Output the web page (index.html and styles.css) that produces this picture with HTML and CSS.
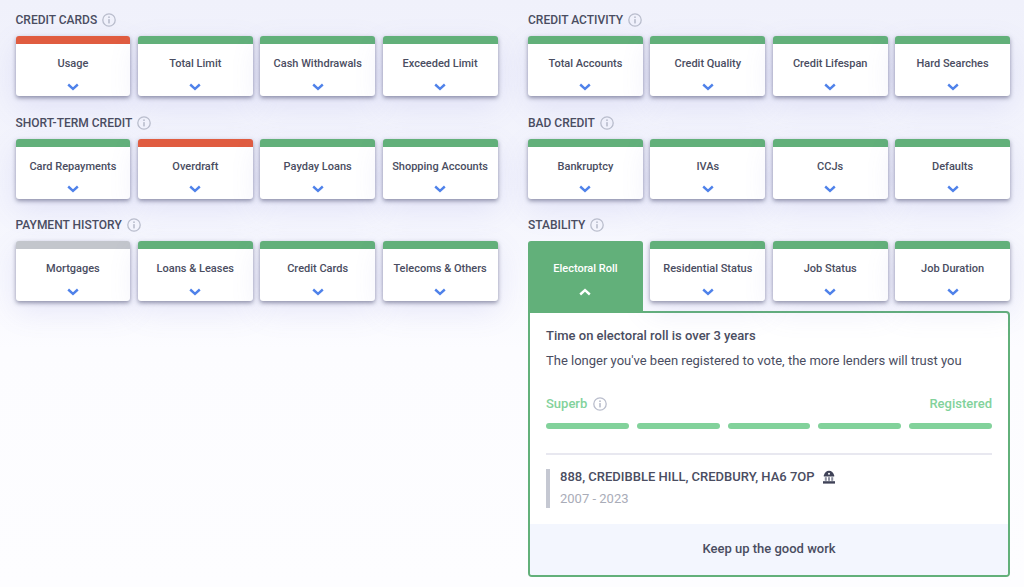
FILE: index.html
```html
<!DOCTYPE html>
<html lang="en">
<head>
  <meta charset="UTF-8" />
  <title>Credit report</title>
  <link rel="stylesheet" href="styles.css">
</head>
<body>
  <svg class="defs" width="0" height="0">
    <symbol id="info" viewBox="0 0 14 14">
      <circle cx="7" cy="7" r="6.2" fill="none" stroke="currentColor" stroke-width="1.3" />
      <circle cx="7" cy="4.2" r="0.9" fill="currentColor" />
      <rect x="6.2" y="6" width="1.6" height="4.4" rx="0.4" fill="currentColor" />
    </symbol>
    <symbol id="chev" viewBox="0 0 12 8">
      <path d="M1.2 1.5 L6 5.8 L10.8 1.5" fill="none" stroke="currentColor" stroke-width="2.4" />
    </symbol>
  </svg>

  <div class="page">
    <!-- Left column -->
    <div class="col">
      <section class="group">
        <h2 class="group-title">CREDIT CARDS <svg class="info"><use href="#info" /></svg></h2>
        <div class="cards">
          <div class="card red"><span class="card-name">Usage</span><svg class="chev"><use href="#chev" /></svg></div>
          <div class="card"><span class="card-name">Total Limit</span><svg class="chev"><use href="#chev" /></svg></div>
          <div class="card"><span class="card-name">Cash Withdrawals</span><svg class="chev"><use href="#chev" /></svg></div>
          <div class="card"><span class="card-name">Exceeded Limit</span><svg class="chev"><use href="#chev" /></svg></div>
        </div>
      </section>

      <section class="group">
        <h2 class="group-title">SHORT-TERM CREDIT <svg class="info"><use href="#info" /></svg></h2>
        <div class="cards">
          <div class="card"><span class="card-name">Card Repayments</span><svg class="chev"><use href="#chev" /></svg></div>
          <div class="card red"><span class="card-name">Overdraft</span><svg class="chev"><use href="#chev" /></svg></div>
          <div class="card"><span class="card-name">Payday Loans</span><svg class="chev"><use href="#chev" /></svg></div>
          <div class="card"><span class="card-name">Shopping Accounts</span><svg class="chev"><use href="#chev" /></svg></div>
        </div>
      </section>

      <section class="group">
        <h2 class="group-title">PAYMENT HISTORY <svg class="info"><use href="#info" /></svg></h2>
        <div class="cards">
          <div class="card grey"><span class="card-name">Mortgages</span><svg class="chev"><use href="#chev" /></svg></div>
          <div class="card"><span class="card-name">Loans &amp; Leases</span><svg class="chev"><use href="#chev" /></svg></div>
          <div class="card"><span class="card-name">Credit Cards</span><svg class="chev"><use href="#chev" /></svg></div>
          <div class="card"><span class="card-name">Telecoms &amp; Others</span><svg class="chev"><use href="#chev" /></svg></div>
        </div>
      </section>
    </div>

    <!-- Right column -->
    <div class="col">
      <section class="group">
        <h2 class="group-title">CREDIT ACTIVITY <svg class="info"><use href="#info" /></svg></h2>
        <div class="cards">
          <div class="card"><span class="card-name">Total Accounts</span><svg class="chev"><use href="#chev" /></svg></div>
          <div class="card"><span class="card-name">Credit Quality</span><svg class="chev"><use href="#chev" /></svg></div>
          <div class="card"><span class="card-name">Credit Lifespan</span><svg class="chev"><use href="#chev" /></svg></div>
          <div class="card"><span class="card-name">Hard Searches</span><svg class="chev"><use href="#chev" /></svg></div>
        </div>
      </section>

      <section class="group">
        <h2 class="group-title">BAD CREDIT <svg class="info"><use href="#info" /></svg></h2>
        <div class="cards">
          <div class="card"><span class="card-name">Bankruptcy</span><svg class="chev"><use href="#chev" /></svg></div>
          <div class="card"><span class="card-name">IVAs</span><svg class="chev"><use href="#chev" /></svg></div>
          <div class="card"><span class="card-name">CCJs</span><svg class="chev"><use href="#chev" /></svg></div>
          <div class="card"><span class="card-name">Defaults</span><svg class="chev"><use href="#chev" /></svg></div>
        </div>
      </section>

      <section class="group">
        <h2 class="group-title">STABILITY <svg class="info"><use href="#info" /></svg></h2>
        <div class="cards">
          <div class="card open"><span class="card-name">Electoral Roll</span><svg class="chev"><use href="#chev" /></svg></div>
          <div class="card"><span class="card-name">Residential Status</span><svg class="chev"><use href="#chev" /></svg></div>
          <div class="card"><span class="card-name">Job Status</span><svg class="chev"><use href="#chev" /></svg></div>
          <div class="card"><span class="card-name">Job Duration</span><svg class="chev"><use href="#chev" /></svg></div>
        </div>

        <div class="detail">
          <div class="detail-body">
            <h3 class="detail-title">Time on electoral roll is over 3 years</h3>
            <p class="detail-text">The longer you've been registered to vote, the more lenders will trust you</p>
            <div class="score">
              <span>Superb <svg class="info"><use href="#info" /></svg></span>
              <span>Registered</span>
            </div>
            <div class="bars">
              <i></i><i></i><i></i><i></i><i></i>
            </div>
            <div class="address">
              <div class="address-line">888, CREDIBBLE HILL, CREDBURY, HA6 7OP
                <svg class="bank" viewBox="0 0 14 14">
                  <path d="M7 .8 C9.5 .8 11.4 2.6 12.2 5.4 V6.4 H1.8 V5.4 C2.6 2.6 4.5 .8 7 .8 Z" fill="#3f4257" />
                  <circle cx="7" cy="3.8" r="1" fill="#fff" />
                  <rect x="2.8" y="7.2" width="2" height="3.6" fill="#8d90a0" />
                  <rect x="6" y="7.2" width="2" height="3.6" fill="#8d90a0" />
                  <rect x="9.2" y="7.2" width="2" height="3.6" fill="#8d90a0" />
                  <rect x="1" y="11.2" width="12" height="2.4" fill="#3f4257" />
                </svg>
              </div>
              <div class="address-dates">2007 - 2023</div>
            </div>
          </div>
          <div class="detail-foot">Keep up the good work</div>
        </div>
      </section>
    </div>
  </div>
</body>
</html>
```

FILE: styles.css
```css
* {
  box-sizing: border-box;
}
html, body {
  height: 587px;
  overflow: hidden;
}
body {
  margin: 0;
  font-family: Roboto, "Liberation Sans", sans-serif;
  color: #4a4d61;
  background: linear-gradient(180deg, #f0f1fb 0, #f4f5fd 200px, #fcfcff 350px, #fdfdff 587px);
}
.defs {
  position: absolute;
}
.page {
  display: flex;
  gap: 30.5px;
  padding: 12px 14px 0 15.5px;
}
.col {
  width: 482px;
}

.group {
  margin-bottom: 18.5px;
}
.group-title {
  display: flex;
  align-items: center;
  gap: 5px;
  height: 16px;
  margin: 0 0 8px;
  font-size: 12px;
  font-weight: 500;
  line-height: 16px;
}
.info {
  width: 14px;
  height: 14px;
  color: #b9bdcc;
}

/* Cards */
.cards {
  display: grid;
  grid-template-columns: repeat(4, 1fr);
  gap: 7.5px;
}
.card {
  display: flex;
  flex-direction: column;
  align-items: center;
  height: 60px;
  padding-top: 13px;
  background-color: #fff;
  border-top: 8px solid #62b07a;
  border-radius: 3px;
  box-shadow: 0 2px 4px rgba(50, 52, 90, 0.5), 0 10px 30px rgba(110, 115, 210, 0.14);
}
.card.red {
  border-top-color: #e05c40;
}
.card.grey {
  border-top-color: #c3c6cc;
}
.card-name {
  font-size: 11px;
  font-weight: 500;
  line-height: 13px;
  white-space: nowrap;
}
.chev {
  width: 12px;
  height: 8px;
  margin-top: 12.5px;
  color: #4f82ea;
}
.card.open {
  height: 71px;
  margin-bottom: -11px;
  padding-top: 21px;
  background-color: #62b07a;
  border-top: 0;
  border-radius: 3px 3px 0 0;
  box-shadow: none;
  color: #fff;
  position: relative;
  z-index: 1;
}
.card.open .chev {
  color: #fff;
  transform: rotate(180deg);
}

/* Detail panel */
.detail {
  height: 266px;
  margin-top: 10px;
  background-color: #fff;
  border: 2px solid #62b07a;
  border-radius: 0 4px 4px 4px;
  overflow: hidden;
}
.detail-body {
  padding: 15px 16px 0;
  height: 211px;
}
.detail-title {
  margin: 0 0 9px;
  font-size: 13px;
  font-weight: 500;
  line-height: 16px;
}
.detail-text {
  margin: 0;
  font-size: 13px;
  line-height: 16px;
}
.score {
  display: flex;
  justify-content: space-between;
  margin-top: 27px;
  color: #82d29b;
  font-size: 13px;
  font-weight: 500;
  line-height: 16px;
}
.score span:first-child {
  display: flex;
  align-items: center;
  gap: 6px;
}
.bars {
  display: flex;
  gap: 8px;
  margin-top: 11px;
}
.bars i {
  flex: 1;
  height: 6px;
  background-color: #82d29b;
  border-radius: 3px;
}
.address {
  margin-top: 24px;
  padding: 14px 0 0 14px;
  border-top: 2px solid #e8e8f0;
  position: relative;
}
.address::before {
  content: "";
  position: absolute;
  left: 0;
  top: 14px;
  width: 4px;
  height: 39px;
  background-color: #c5c8d2;
}
.address-line {
  display: flex;
  align-items: center;
  gap: 7px;
  font-size: 13px;
  font-weight: 500;
  line-height: 16px;
}
.bank {
  width: 14px;
  height: 14px;
}
.address-dates {
  margin-top: 6px;
  font-size: 13px;
  line-height: 16px;
  color: #a9acb8;
}
.detail-foot {
  height: 51px;
  background-color: #f3f6fe;
  font-size: 13px;
  font-weight: 500;
  line-height: 49px;
  text-align: center;
}
```
